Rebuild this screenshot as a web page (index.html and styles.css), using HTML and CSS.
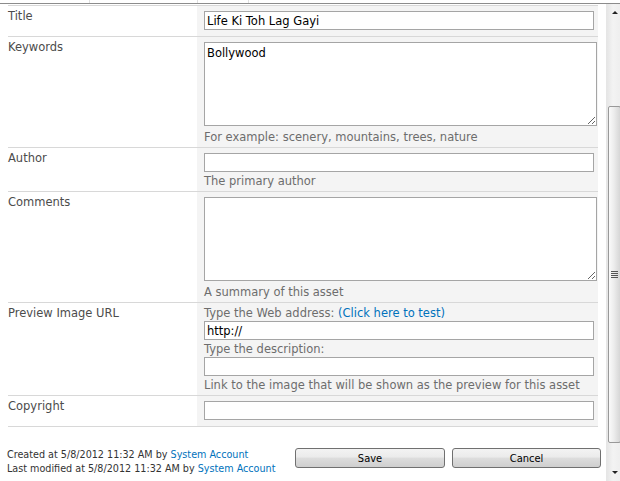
FILE: index.html
```html
<!DOCTYPE html>
<html>
<head>
<meta charset="utf-8">
<link rel="stylesheet" href="styles.css">
</head>
<body>
<div class="strip">
  <div class="strip-cell c1"></div>
  <div class="strip-cell c2"></div>
  <div class="strip-cell c3"></div>
  <div class="strip-cell c4"></div>
</div>
<div class="frame">
  <div class="page">
    <div class="form">
      <div class="label">Title</div>
      <div class="field nohint"><input class="txt" type="text" value="Life Ki Toh Lag Gayi"></div>

      <div class="label">Keywords</div>
      <div class="field"><textarea class="area">Bollywood</textarea><div class="hint">For example: scenery, mountains, trees, nature</div></div>

      <div class="label">Author</div>
      <div class="field"><input class="txt" type="text"><div class="hint">The primary author</div></div>

      <div class="label">Comments</div>
      <div class="field"><textarea class="area"></textarea><div class="hint">A summary of this asset</div></div>

      <div class="label">Preview Image URL</div>
      <div class="field url">
        <div class="sub">Type the Web address: <a class="link" href="#">(Click here to test)</a></div>
        <input class="txt" type="text" value="http://">
        <div class="sub">Type the description:</div>
        <input class="txt" type="text">
        <div class="hint">Link to the image that will be shown as the preview for this asset</div>
      </div>

      <div class="label">Copyright</div>
      <div class="field nohint"><input class="txt" type="text"></div>
    </div>
    <div class="footer">
      <div class="meta">
        <div>Created at 5/8/2012 11:32 AM by <a class="link" href="#">System Account</a></div>
        <div>Last modified at 5/8/2012 11:32 AM by <a class="link" href="#">System Account</a></div>
      </div>
      <div class="buttons">
        <button class="btn save">Save</button>
        <button class="btn cancel">Cancel</button>
      </div>
    </div>
  </div>
  <div class="scrollbar">
    <div class="arrow up"></div>
    <div class="track">
      <div class="thumb"><div class="grip"></div></div>
    </div>
    <div class="arrow down"></div>
  </div>
</div>
</body>
</html>
```

FILE: styles.css
```css
html, body {
  margin: 0;
  padding: 0;
  background: #fff;
}
body {
  width: 620px;
  height: 481px;
  overflow: hidden;
  font-family: "DejaVu Sans", Verdana, sans-serif;
  font-size: 11.5px;
  color: #444;
}
.strip {
  display: flex;
  height: 3px;
  border-bottom: 1px solid #8c8c8c;
}
.strip-cell { height: 3px; }
.strip .c1 { width: 89px; }
.strip .c2 { width: 107px; border-left: 1px solid #e0e0e0; }
.strip .c3 { width: 50px; border-left: 1px solid #e0e0e0; }
.strip .c4 { flex: 1; border-left: 1px solid #e0e0e0; }

.frame {
  display: flex;
  height: 477px;
  border-right: 1px solid #3c7fb1;
}
.page {
  width: 594px;
  padding: 1px 0 0 8px;
}
.form {
  display: grid;
  grid-template-columns: 189px 401px;
  width: 590px;
  border-bottom: 1px solid #d8d8d8;
}
.label {
  border-top: 1px solid #d8d8d8;
  padding: 3px 0 0 0;
  line-height: 15px;
  color: #4c4c4c;
}
.field {
  border-top: 1px solid #d8d8d8;
  background: #f4f4f4;
  padding: 5px 0 0 7px;
}
.field.nohint { padding-bottom: 6px; }
.txt {
  display: block;
  box-sizing: border-box;
  width: 390px;
  height: 19px;
  margin: 0;
  padding: 0 2px;
  border: 1px solid #a5a5a5;
  background: #fff;
  font-family: "DejaVu Sans", Verdana, sans-serif;
  font-size: 11.5px;
  color: #000;
  outline: none;
}
.area {
  display: block;
  box-sizing: border-box;
  width: 393px;
  height: 84px;
  margin: 0 0 2px 0;
  padding: 3px 2px;
  border: 1px solid #a5a5a5;
  background: #fff;
  font-family: "DejaVu Sans", Verdana, sans-serif;
  font-size: 11.5px;
  color: #000;
  resize: both;
  outline: none;
}
.hint {
  padding: 2px 0 2px 0;
  line-height: 15px;
  color: #6d6d6d;
}
.url { padding-top: 1px; }
.sub {
  padding: 2px 0 0 0;
  line-height: 15px;
  color: #6d6d6d;
}
.link {
  color: #0072bc;
  text-decoration: none;
}
.footer {
  display: flex;
  justify-content: space-between;
  align-items: flex-start;
  padding: 21px 0 0 0;
  margin-left: -1px;
}
.meta {
  font-family: Tahoma, "DejaVu Sans Condensed", "Liberation Sans", sans-serif;
  font-size: 10.7px;
  line-height: 14px;
  color: #333;
  padding-top: 0;
}
.buttons {
  display: flex;
  gap: 7px;
  margin-right: -3px;
}
.btn {
  box-sizing: border-box;
  height: 20px;
  padding: 0;
  border: 1px solid #707070;
  border-radius: 3px;
  background: linear-gradient(#f3f3f3 0%, #ebebeb 45%, #dddddd 50%, #cfcfcf 100%);
  font-family: Tahoma, "DejaVu Sans Condensed", "Liberation Sans", sans-serif;
  font-size: 11px;
  color: #000;
}
.save { width: 150px; }
.cancel { width: 149px; }

.scrollbar {
  display: flex;
  flex-direction: column;
  width: 16px;
  margin-left: 8px;
  border-left: 1px solid #e6e6e6;
  background: linear-gradient(90deg, #e6e6e6, #f3f3f3 40%, #ededed);
}
.arrow {
  height: 17px;
  position: relative;
}
.arrow.up::after, .arrow.down::after {
  content: "";
  position: absolute;
  left: 5px;
  border-left: 3px solid transparent;
  border-right: 3px solid transparent;
}
.arrow.up::after {
  top: 7px;
  border-bottom: 3px solid #222;
}
.arrow.down::after {
  top: 7px;
  border-top: 3px solid #222;
}
.track {
  flex: 1;
  padding: 85px 0 21px 1px;
  display: flex;
}
.thumb {
  flex: 1;
  box-sizing: border-box;
  width: 13px;
  margin-right: 1px;
  border: 1px solid #999;
  border-radius: 2px;
  background: linear-gradient(90deg, #fafafa, #ececec 45%, #d6d6d6 100%);
  display: flex;
  align-items: center;
  justify-content: center;
}
.grip {
  width: 7px;
  height: 7px;
  background: repeating-linear-gradient(#555 0, #555 1px, transparent 1px, transparent 2px);
}
```
